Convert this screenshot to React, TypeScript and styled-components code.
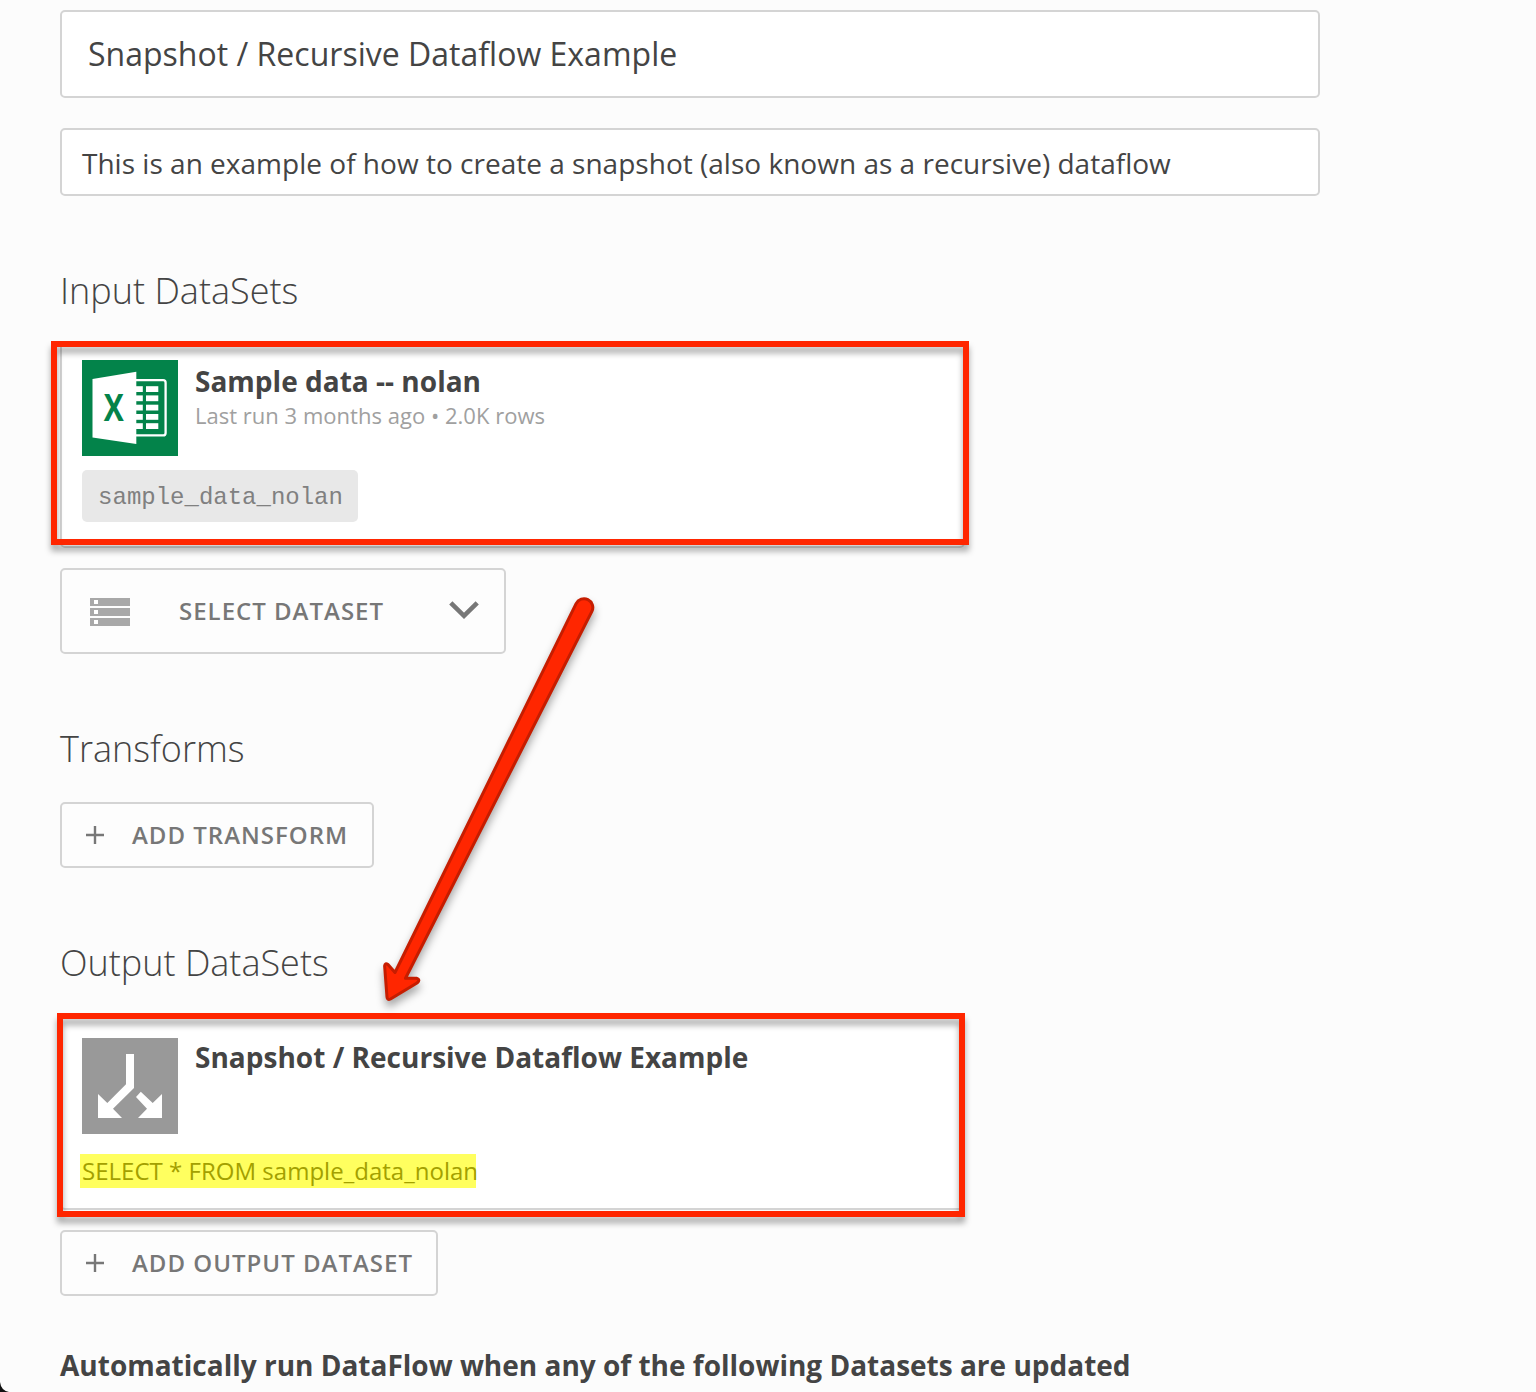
import React from "react";
import styled, { createGlobalStyle } from "styled-components";

const GlobalStyle = createGlobalStyle`
  * { box-sizing: border-box; }
  html, body { margin: 0; background: #fcfcfc; }
  body { font-family: "Open Sans", "Noto Sans", sans-serif; color: #444; }
`;

const Page = styled.main`
  position: relative;
  width: 1536px;
  height: 1392px;
  padding: 10px 0 0 60px;
  overflow: hidden;
  background: #fcfcfc;
  display: flex;
  flex-direction: column;
  align-items: flex-start;
  white-space: nowrap;
`;

const Field = styled.div<{ $h: number; $pad: string; $size: number; $mt?: number }>`
  width: 1260px;
  height: ${(p) => p.$h}px;
  margin-top: ${(p) => p.$mt ?? 0}px;
  padding: ${(p) => p.$pad};
  display: flex;
  align-items: center;
  border: 2px solid #d4d4d4;
  border-radius: 5px;
  background: #fff;
  font-size: ${(p) => p.$size}px;
  letter-spacing: 0.013px;
`;

const Heading = styled.h2<{ $mt: number }>`
  margin: ${(p) => p.$mt}px 0 0;
  height: 50px;
  line-height: 50px;
  font-size: 36px;
  font-weight: 300;
`;

const Card = styled.section<{ $w: number; $h: number; $mt: number; $pt: number }>`
  width: ${(p) => p.$w}px;
  height: ${(p) => p.$h}px;
  margin-top: ${(p) => p.$mt}px;
  padding: ${(p) => p.$pt}px 20px 0;
  border: 2px solid #d4d4d4;
  border-radius: 5px;
  background: #fff;
`;

const CardTop = styled.div`
  display: flex;
  gap: 17px;
  height: 96px;
`;

const CardTitle = styled.h3<{ $line: number }>`
  margin: 0;
  height: 40px;
  line-height: ${(p) => p.$line}px;
  font-size: 28px;
  font-weight: 700;
  letter-spacing: 0.013px;
`;

const Meta = styled.div`
  height: 30px;
  line-height: 30px;
  font-size: 22px;
  letter-spacing: 0.02px;
  color: #a0a0a0;
`;

const Chip = styled.code`
  display: flex;
  align-items: center;
  justify-content: center;
  width: 276px;
  height: 52px;
  margin-top: 14px;
  padding: 3px 0 0 1px;
  border-radius: 5px;
  background: #e8e8e8;
  color: #808080;
  font-family: "Courier New", "Liberation Mono", monospace;
  font-size: 24px;
`;

const Query = styled.div`
  display: inline-block;
  margin: 20px 0 0 -2px;
  padding-left: 2px;
  height: 34px;
  line-height: 34px;
  font-size: 24px;
  letter-spacing: 0.02px;
  color: #a3a000;
  background: linear-gradient(#ffff5f, #ffff5f) 0 0 / 396px 34px no-repeat;
`;

const Button = styled.button<{ $w: number; $h: number; $mt: number }>`
  display: flex;
  align-items: center;
  width: ${(p) => p.$w}px;
  height: ${(p) => p.$h}px;
  margin: ${(p) => p.$mt}px 0 0;
  padding: 0 24px;
  border: 2px solid #d4d4d4;
  border-radius: 5px;
  background: #fdfdfd;
  color: #777;
  font-family: inherit;
  font-size: 24px;
  font-weight: 600;
  letter-spacing: 1px;
  white-space: nowrap;
`;

const SelectLabel = styled.span`
  width: 269.5px;
  margin-left: 49px;
  padding-bottom: 2px;
  text-align: left;
`;

const AddLabel = styled.span`
  margin-left: 28px;
  padding-bottom: 2px;
`;

const ListIcon = styled.svg`
  flex: none;
  margin: 2px 0 0 4px;
`;

const Icon = styled.svg`
  flex: none;
`;

const Footer = styled.h4`
  margin: 49px 0 0;
  height: 40px;
  line-height: 40px;
  font-size: 28px;
  font-weight: 700;
`;

const Callout = styled.div<{ $x: number; $y: number; $w: number }>`
  position: absolute;
  left: ${(p) => p.$x}px;
  top: ${(p) => p.$y}px;
  width: ${(p) => p.$w}px;
  height: 204px;
  border: 6px solid #ff2600;
  filter: drop-shadow(0 6px 3px rgba(0, 0, 0, 0.34));
  pointer-events: none;
`;

const Arrow = styled.svg`
  position: absolute;
  left: 360px;
  top: 580px;
  overflow: visible;
  filter: drop-shadow(0 6px 4px rgba(0, 0, 0, 0.34));
  pointer-events: none;
`;

const Corner = styled.svg`
  position: absolute;
  left: 0;
  bottom: 0;
`;

const ExcelLogo = () => (
  <Icon width="96" height="96" viewBox="0 0 96 96">
    <rect width="96" height="96" fill="#03834a" />
    <path d="M54 20.2H81.1Q83.6 20.2 83.6 22.7V72.9Q83.6 75.4 81.1 75.4H54" fill="none" stroke="#fff" strokeWidth="2.3" />
    {[26.2, 35.4, 44.7, 54, 63.2].map((y) => (
      <g key={y} fill="#fff">
        <rect x="54" y={y} width="6.8" height="5.8" />
        <rect x="64" y={y} width="12.3" height="5.8" />
      </g>
    ))}
    <path d="M10.5 19L54.3 11.8V84L10.5 77.5Z" fill="#fff" />
    <text x="21.7" y="61" fontSize="37.5" fontWeight="700" textLength="20" lengthAdjust="spacingAndGlyphs" fill="#03834a">
      X
    </text>
  </Icon>
);

const FlowLogo = () => (
  <Icon width="96" height="96" viewBox="0 0 96 96">
    <rect width="96" height="96" fill="#999" />
    <path
      fill="#fff"
      d="M44 16H52V50L31 70.8L40 80H16V56L25.3 65L44 46.3ZM58.8 53.7L70.7 65L80 56V80H56L65 70.8L54 59Z"
    />
  </Icon>
);

const PlusIcon = () => (
  <Icon width="18" height="18" viewBox="0 0 18 18">
    <path d="M9 0V18M0 9H18" stroke="#777" strokeWidth="2.4" />
  </Icon>
);

export default function App() {
  return (
    <>
      <GlobalStyle />
      <Page>
        <Field $h={88} $pad="0 0 2px 26px" $size={32}>Snapshot / Recursive Dataflow Example</Field>
        <Field $h={68} $pad="2px 0 0 20px" $size={28} $mt={30}>
          This is an example of how to create a snapshot (also known as a recursive) dataflow
        </Field>

        <Heading $mt={70}>Input DataSets</Heading>
        <Card $w={905} $h={206} $mt={26} $pt={16}>
          <CardTop>
            <ExcelLogo />
            <div>
              <CardTitle $line={42}>Sample data -- nolan</CardTitle>
              <Meta>Last run 3 months ago • 2.0K rows</Meta>
            </div>
          </CardTop>
          <Chip>sample_data_nolan</Chip>
        </Card>
        <Button $w={446} $h={86} $mt={20}>
          <ListIcon width="40" height="28" viewBox="0 0 40 28">
            {[0, 10, 20].map((y) => (
              <g key={y}>
                <rect y={y} width="40" height="8" fill="#a8a8a8" />
                <rect x="4" y={y + 2} width="4" height="4" fill="#fff" />
              </g>
            ))}
          </ListIcon>
          <SelectLabel>SELECT DATASET</SelectLabel>
          <Icon width="30" height="22" viewBox="0 0 30 22">
            <path d="M1.8 2.8L15 15.8L28.2 2.8" fill="none" stroke="#777" strokeWidth="4.6" />
          </Icon>
        </Button>

        <Heading $mt={70}>Transforms</Heading>
        <Button $w={314} $h={66} $mt={28}>
          <PlusIcon />
          <AddLabel>ADD TRANSFORM</AddLabel>
        </Button>

        <Heading $mt={70}>Output DataSets</Heading>
        <Card $w={905} $h={194} $mt={28} $pt={20}>
          <CardTop>
            <FlowLogo />
            <CardTitle $line={38}>Snapshot / Recursive Dataflow Example</CardTitle>
          </CardTop>
          <Query>SELECT * FROM sample_data_nolan</Query>
        </Card>
        <Button $w={378} $h={66} $mt={20}>
          <PlusIcon />
          <AddLabel>ADD OUTPUT DATASET</AddLabel>
        </Button>

        <Footer>Automatically run DataFlow when any of the following Datasets are updated</Footer>

        <Callout $x={51} $y={341} $w={918} />
        <Callout $x={57} $y={1013} $w={908} />
        <Arrow width="250" height="430" viewBox="360 580 250 430">
          <path
            d="M576.1 603.6A8.8 8.8 0 0 1 591.9 611.4L405.5 978.3L416.5 978.3Q421 979.5 417 983L390.5 999Q387.3 1000.5 387 997L384.6 966Q385 962.5 388 964.5L395 972.5Z"
            fill="#ff2600"
            stroke="#c61d00"
            strokeWidth="3"
            strokeLinejoin="round"
          />
        </Arrow>
        <Corner width="10" height="10" viewBox="0 0 10 10">
          <path d="M0 0Q1 8.5 9 10H0Z" fill="#111" />
        </Corner>
      </Page>
    </>
  );
}
